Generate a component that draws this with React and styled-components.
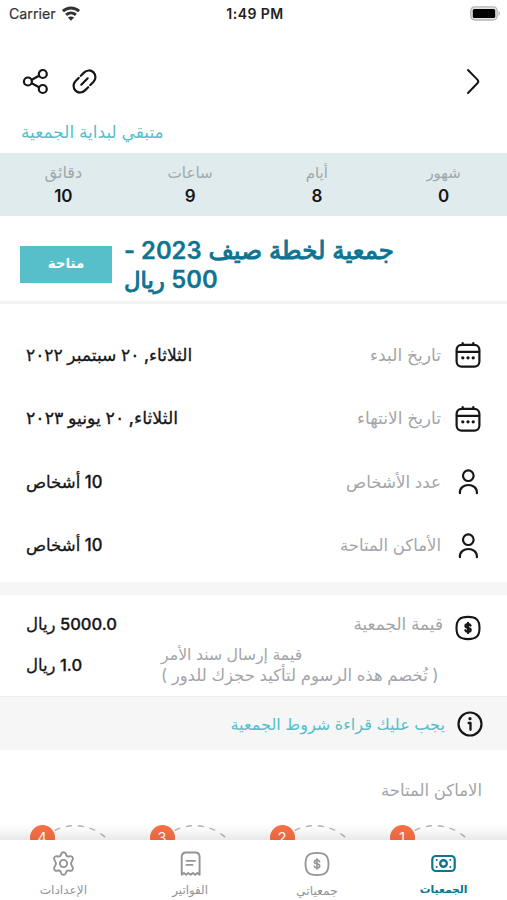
import React from 'react';
import styled, { createGlobalStyle } from 'styled-components';

const ink = '#151618';
const muted = '#a3a5aa';
const aqua = '#56bfca';
const teal = '#0d7592';

const Global = createGlobalStyle`
  * { box-sizing: border-box; }
  body { margin: 0; background: #fff; }
`;

const Screen = styled.main`
  display: flex;
  flex-direction: column;
  width: 507px;
  height: 900px;
  overflow: hidden;
  background: #fff;
  color: ${ink};
  font-family: Inter, 'DejaVu Sans', sans-serif;
  direction: rtl;
  white-space: nowrap;
`;

const StatusBar = styled.header`
  display: grid;
  grid-template-columns: 1fr auto 1fr;
  align-items: center;
  direction: ltr;
  height: 27px;
  padding: 0 6px 0 9px;
  font-size: 14.2px;
`;

const Carrier = styled.div`
  display: flex;
  align-items: center;
  gap: 5px;
  color: #333;
  -webkit-text-stroke: 0.2px #333;
`;

const Clock = styled.time`
  font-size: 14px;
  font-weight: 600;
  letter-spacing: 0.45px;
  color: #222;
`;

const Battery = styled.div`
  display: flex;
  justify-content: flex-end;
`;

const Toolbar = styled.nav`
  display: flex;
  align-items: center;
  justify-content: space-between;
  height: 109px;
  padding: 0 28px 0 23px;
`;

const Actions = styled.div`
  display: flex;
  gap: 24px;
`;

const IconButton = styled.button`
  display: flex;
  padding: 0;
  border: 0;
  background: none;
  color: ${ink};
`;

const Stroke = styled.svg`
  display: block;
  flex: none;
  overflow: visible;
  fill: none;
  stroke: currentColor;
  stroke-width: ${p => p.$w || 2};
  stroke-linecap: round;
  stroke-linejoin: round;
`;

const CountdownCaption = styled.p`
  margin: -17px 0 0;
  padding-left: 21px;
  height: 34px;
  line-height: 26px;
  text-align: left;
  font-size: 17px;
  color: ${aqua};
`;

const Countdown = styled.section`
  display: grid;
  grid-template-columns: repeat(4, 1fr);
  height: 63px;
  padding-top: 9px;
  background: #e0ebed;
  text-align: center;
`;

const Unit = styled.div`
  font-size: ${p => p.$size}px;
  line-height: 21px;
  color: #a1a8ab;
`;

const UnitValue = styled.div`
  font-size: 17px;
  line-height: 26px;
  font-weight: 600;
  color: ${ink};
`;

const TitleBar = styled.section`
  display: flex;
  justify-content: flex-end;
  align-items: center;
  gap: 12px;
  height: 88px;
  padding: 12px 0 0 20px;
  border-bottom: 3px solid #f2f3f3;
`;

const Title = styled.h1`
  width: 270px;
  margin: 0;
  line-height: 29px;
  font-weight: 400;
  color: ${teal};
  -webkit-text-stroke: 1px ${teal};
`;

const TitleLine = styled.div`
  height: 29px;
  font-size: ${p => (p.$end ? 22.8 : 24.5)}px;
  text-align: ${p => (p.$end ? 'left' : 'right')};
`;

const Figure = styled.span`
  font-size: 23.8px;
  font-weight: 600;
  -webkit-text-stroke: 0.3px ${teal};
`;

const Status = styled.div`
  display: flex;
  align-items: center;
  justify-content: center;
  width: 92px;
  height: 37px;
  padding-bottom: 3px;
  background: ${aqua};
  color: #fff;
  font-size: 13.4px;
  font-weight: 700;
`;

const Details = styled.section`
  display: flex;
  flex-direction: column;
  height: 278px;
  padding-top: 19.5px;
`;

const DetailRow = styled.div`
  display: flex;
  align-items: center;
  height: 63.5px;
  padding: 0 26px 0 26px;
`;

const Label = styled.span`
  flex: 1;
  margin-right: ${p => p.$gap || 14}px;
  padding-bottom: ${p => p.$lift || 0}px;
  font-size: ${p => p.$size || 16.6}px;
  line-height: 24px;
  color: ${muted};
`;

const Value = styled.span`
  padding-bottom: ${p => p.$lift || 0}px;
  font-size: ${p => p.$size || 16.5}px;
  line-height: 24px;
  font-weight: 500;
  -webkit-text-stroke: 0.3px ${ink};
`;

const Band = styled.div`
  flex: none;
  height: 13px;
  background: #f6f6f6;
`;

const Amounts = styled.section`
  flex: none;
  height: 101px;
  padding-top: 17px;
`;

const AmountRow = styled.div`
  display: flex;
  align-items: flex-start;
  height: 33px;
  padding: 0 26px 0 26px;
`;

const AmountIcon = styled.div`
  padding-top: 3px;
`;

const FeeRow = styled.div`
  display: flex;
  align-items: center;
  justify-content: space-between;
  height: 39px;
  padding: 0 69px 0 26px;
`;

const FeeText = styled.div`
  display: flex;
  flex-direction: column;
  align-items: flex-end;
  width: 277px;
  line-height: 21px;
  font-size: 16.5px;
  color: ${muted};
`;

const FeeName = styled.div`
  font-size: 15.75px;
`;

const Terms = styled.section`
  display: flex;
  flex: none;
  align-items: center;
  gap: 12px;
  height: 54px;
  padding: 0 24px 0 0;
  border-top: 1px solid #eceded;
  background: #f6f6f6;
`;

const TermsLink = styled.a`
  font-size: 16.1px;
  color: ${aqua};
`;

const Places = styled.section`
  flex: none;
  height: 90px;
  overflow: hidden;
`;

const PlacesHeading = styled.h2`
  margin: 0;
  padding: 28px 25px 0 0;
  height: 75px;
  font-size: 16.5px;
  line-height: 24px;
  font-weight: 400;
  color: ${muted};
`;

const Seats = styled.div`
  display: flex;
  gap: 28px;
  padding-right: 26.5px;
`;

const Seat = styled.div`
  position: relative;
  flex: none;
  width: 92px;
  height: 92px;
`;

const Badge = styled.span`
  position: absolute;
  top: 0;
  left: 1px;
  width: 25px;
  height: 25px;
  border-radius: 50%;
  background: #fa7046;
  color: #fff;
  font-size: 15px;
  line-height: 26px;
  text-align: center;
`;

const TabBar = styled.footer`
  position: relative;
  display: grid;
  grid-template-columns: repeat(4, 1fr);
  flex: none;
  height: 60px;
  background: #fff;

  &::before {
    content: '';
    position: absolute;
    bottom: 100%;
    left: 0;
    right: 0;
    height: 17px;
    background: linear-gradient(rgba(0, 0, 0, 0), rgba(0, 0, 0, 0.03) 50%, rgba(0, 0, 0, 0.09));
  }
`;

const Tab = styled.button`
  display: flex;
  flex-direction: column;
  align-items: center;
  gap: 4px;
  padding: 11px 0 0;
  border: 0;
  background: none;
  color: ${p => (p.$active ? teal : '#929497')};
  font-family: inherit;
  font-size: ${p => p.$size}px;
  font-weight: ${p => (p.$active ? 700 : 400)};
  line-height: 20px;
`;

const ShareIcon = () => (
  <Stroke width="25" height="25" viewBox="0 0 25 25" $w="2.2">
    <circle cx="4.9" cy="12.5" r="4" />
    <circle cx="19.8" cy="5" r="4" />
    <circle cx="19.8" cy="20" r="4" />
    <path d="M8.8 10.8 16 6.8M8.8 14.2l7.200 4" />
  </Stroke>
);

const LinkIcon = () => (
  <Stroke width="25" height="25" viewBox="0 0 25 25" $w="2.2">
    <path d="M8.8 6.8 12 3.6C14.6.9 18.8.7 21.5 3.4c2.7 2.7 2.5 6.8-.1 9.5l-3.1 3.2" />
    <path d="M16.2 18.2 13 21.4c-2.6 2.7-6.8 2.9-9.5.2-2.7-2.7-2.5-6.8.1-9.5l3.1-3.2" />
    <path d="m9.3 15.7 6.4-6.4" />
  </Stroke>
);

const ForwardIcon = () => (
  <Stroke width="12" height="25" viewBox="0 0 12 25">
    <path d="m1 1 9.4 9.6c1.1 1.1 1.1 2.5 0 3.6L1 24" />
  </Stroke>
);

const WifiIcon = () => (
  <Stroke width="20" height="17" viewBox="0 0 20 17" $w="2.9">
    <path d="M1.9 6.1c4.7-4.2 11.5-4.2 16.2 0M5.1 9.9c2.9-2.6 6.9-2.6 9.8 0" strokeLinecap="butt" />
    <path d="M10 15.8 6.9 12.5c1.8-1.5 4.4-1.5 6.2 0Z" fill="currentColor" stroke="none" />
  </Stroke>
);

const BatteryIcon = () => (
  <svg width="31" height="15" viewBox="0 0 31 15">
    <rect x=".8" y=".8" width="26.4" height="13.2" rx="4" fill="#e4e4e4" stroke="#b5b5b5" strokeWidth="1.3" />
    <rect x="2.8" y="3" width="22.4" height="9" rx="1.5" fill="#000" />
    <path d="M28.6 5v5c1.8-.7 1.8-4.3 0-5Z" fill="#b5b5b5" />
  </svg>
);

const CalendarIcon = () => (
  <Stroke width="26" height="26" viewBox="0 0 26 26" $w="2.2">
    <rect x="1.6" y="2.8" width="22.8" height="21.8" rx="5" />
    <path d="M2 9.8h22M7.7 1v1.8M18.3 1v1.8" />
    <path d="M7.8 15.8h.01M13 15.8h.01M18.2 15.8h.01" strokeWidth="3.3" />
  </Stroke>
);

const PersonIcon = () => (
  <Stroke width="26" height="26" viewBox="0 0 26 26" $w="2.2">
    <circle cx="13.3" cy="6.7" r="5.3" />
    <path d="M4.9 24.2v-.7c0-10 17-10 17 0v.7" />
  </Stroke>
);

const DollarSign = ({ w }) => (
  <path
    strokeWidth={w}
    d="M15.6 10.6c-.4-1-1.3-1.5-2.6-1.5-1.5 0-2.6.7-2.6 1.9 0 2.7 5.3 1.1 5.3 3.9 0 1.2-1.2 1.9-2.7 1.9-1.4 0-2.4-.5-2.7-1.6M13 7.9v10.2"
  />
);

const CoinIcon = ({ w = 2.1, sign = 2.2 }) => (
  <Stroke width="26" height="26" viewBox="0 0 26 26" $w={w}>
    <path d="M13 1.9c8.3 0 11.5 3 11.5 11.1S21.3 24.1 13 24.1 1.5 21.1 1.5 13 4.7 1.9 13 1.9Z" />
    <DollarSign w={sign} />
  </Stroke>
);

const InfoIcon = () => (
  <Stroke width="26" height="26" viewBox="0 0 26 26" $w="2.2">
    <circle cx="13" cy="13" r="11.5" />
    <path d="M11.6 12h1.9v6.8" strokeWidth="2.3" />
    <path d="M13 7.7h.01" strokeWidth="3.2" />
  </Stroke>
);

const CashIcon = () => (
  <Stroke width="25" height="25" viewBox="0 0 25 25" $w="2.2">
    <rect x="1.3" y="5" width="22.4" height="15" rx="3.6" />
    <circle cx="12.5" cy="12.5" r="3.3" strokeWidth="2.4" />
    <path d="M5.7 8.9h.01M19.3 8.9h.01M5.7 16.1h.01M19.3 16.1h.01" strokeWidth="2" />
  </Stroke>
);

const ReceiptIcon = () => (
  <Stroke width="25" height="25" viewBox="0 0 25 25" $w="1.9">
    <path d="M3.7 23.7V6c0-3 1.5-4.5 4.5-4.5h8.9c3 0 4.5 1.5 4.5 4.5v17.7l-2.2-1.8-2.3 1.9-2.2-1.9-2.3 1.9-2.3-1.9-2.2 1.9-2.2-1.9Z" />
    <path d="M8.5 9.9h8.4M8.5 13.9h6" />
  </Stroke>
);

const GearIcon = () => (
  <Stroke width="25" height="25" viewBox="0 0 25 25" $w="1.9">
    <path d="M10.3 2.7c.8-1.9 3.6-1.9 4.4 0l.5 1.5c.4 1 1.4 1.5 2.4 1.3l1.6-.3c2-.3 3.5 2.1 2.3 3.8l-1 1.9c-.5.9-.5 2.3 0 3.2l1 1.9c1.2 1.7-.3 4.1-2.3 3.8l-1.6-.3c-1-.2-2 .3-2.4 1.3l-.5 1.5c-.8 1.9-3.6 1.9-4.4 0l-.5-1.5c-.4-1-1.4-1.5-2.4-1.3l-1.6.3c-2 .3-3.5-2.1-2.3-3.800l1-1.9c.5-.9.5-2.3 0-3.2l-1-1.9C2.3 7.300 3.8 4.9 5.8 5.2l1.6.3c1 .2 2-.3 2.4-1.3Z" />
    <circle cx="12.5" cy="12.5" r="3.6" />
  </Stroke>
);

const units = [
  ['شهور', 0, 15],
  ['أيام', 8, 15],
  ['ساعات', 9, 15.2],
  ['دقائق', 10, 16.2],
];

const details = [
  [CalendarIcon, 'تاريخ البدء', 17.1, 'الثلاثاء, ٢٠ سبتمبر ٢٠٢٢', 17.1],
  [CalendarIcon, 'تاريخ الانتهاء', 17, 'الثلاثاء, ٢٠ يونيو ٢٠٢٣', 17.4],
  [PersonIcon, 'عدد الأشخاص', 16.7, '10 أشخاص', 16.6],
  [PersonIcon, 'الأماكن المتاحة', 16.5, '10 أشخاص', 16.6],
];

const tabs = [
  [<CashIcon />, 'الجمعيات', 10.7, true],
  [<CoinIcon w={1.8} sign={1.6} />, 'جمعياتي', 12.3, false],
  [<ReceiptIcon />, 'الفواتير', 11.8, false],
  [<GearIcon />, 'الإعدادات', 12.1, false],
];

export default function App() {
  return (
    <>
      <Global />
      <Screen>
        <StatusBar>
          <Carrier>Carrier <WifiIcon /></Carrier>
          <Clock>1:49 PM</Clock>
          <Battery><BatteryIcon /></Battery>
        </StatusBar>

        <Toolbar>
          <IconButton aria-label="رجوع"><ForwardIcon /></IconButton>
          <Actions>
            <IconButton aria-label="نسخ الرابط"><LinkIcon /></IconButton>
            <IconButton aria-label="مشاركة"><ShareIcon /></IconButton>
          </Actions>
        </Toolbar>

        <CountdownCaption>متبقي لبداية الجمعية</CountdownCaption>
        <Countdown>
          {units.map(([name, value, size]) => (
            <Unit key={name} $size={size}>
              {name}
              <UnitValue>{value}</UnitValue>
            </Unit>
          ))}
        </Countdown>

        <TitleBar>
          <Title>
            <TitleLine>جمعية لخطة صيف <Figure>2023 -</Figure></TitleLine>
            <TitleLine $end><Figure>500</Figure> ريال</TitleLine>
          </Title>
          <Status>متاحة</Status>
        </TitleBar>

        <Details>
          {details.map(([Icon, label, labelSize, value, valueSize]) => (
            <DetailRow key={label}>
              <Icon />
              <Label $size={labelSize} $lift={1}>{label}</Label>
              <Value $size={valueSize} $lift={1}>{value}</Value>
            </DetailRow>
          ))}
        </Details>
        <Band />

        <Amounts>
          <AmountRow>
            <AmountIcon><CoinIcon /></AmountIcon>
            <Label $size={16.9} $gap={12}>قيمة الجمعية</Label>
            <Value>5000.0 ريال</Value>
          </AmountRow>
          <FeeRow>
            <FeeText>
              <FeeName>قيمة إرسال سند الأمر</FeeName>
              <div>( تُخصم هذه الرسوم لتأكيد حجزك للدور )</div>
            </FeeText>
            <Value>1.0 ريال</Value>
          </FeeRow>
        </Amounts>

        <Terms>
          <InfoIcon />
          <TermsLink>يجب عليك قراءة شروط الجمعية</TermsLink>
        </Terms>

        <Places>
          <PlacesHeading>الاماكن المتاحة</PlacesHeading>
          <Seats>
            {[1, 2, 3, 4].map(n => (
              <Seat key={n}>
                <Stroke width="92" height="92" viewBox="0 0 92 92" $w="1.4" color="#b4b4b4">
                  <circle cx="46" cy="46" r="45.3" strokeDasharray="6 6" strokeLinecap="butt" />
                </Stroke>
                <Badge>{n}</Badge>
              </Seat>
            ))}
          </Seats>
        </Places>

        <TabBar>
          {tabs.map(([icon, label, size, active]) => (
            <Tab key={label} $size={size} $active={active}>
              {icon}
              {label}
            </Tab>
          ))}
        </TabBar>
      </Screen>
    </>
  );
}
